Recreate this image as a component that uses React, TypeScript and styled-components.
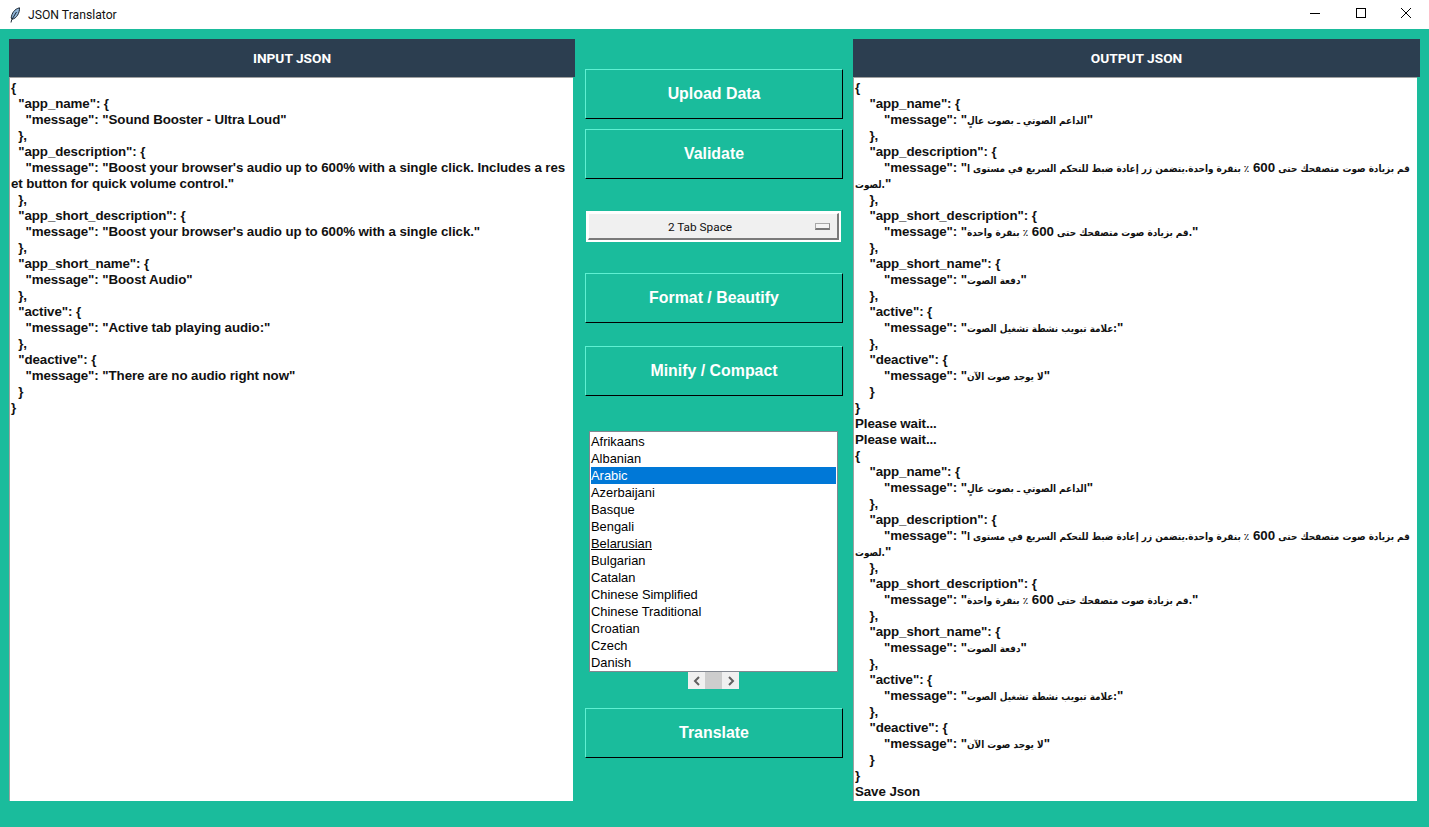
import React from 'react'
import styled, { createGlobalStyle } from 'styled-components'

const TEAL = '#1abc9c'
const NAVY = '#2c3e50'

const GlobalStyle = createGlobalStyle`
  html, body {
    margin: 0;
    padding: 0;
    overflow: hidden;
    background: ${TEAL};
  }
`

const Window = styled.div`
  display: flex;
  flex-direction: column;
  width: 1429px;
  height: 827px;
  background: ${TEAL};
`

const TitleBar = styled.div`
  display: flex;
  align-items: center;
  flex: 0 0 29px;
  padding-left: 9px;
  background: #fff;
`

const AppTitle = styled.span`
  margin-left: 7px;
  font: 12.2px 'Roboto', 'Open Sans', sans-serif;
  color: #111;
`

const Controls = styled.div`
  display: flex;
  align-self: flex-start;
  margin-left: auto;
`

const ControlButton = styled.div`
  display: flex;
  align-items: center;
  justify-content: center;
  width: 45.5px;
  height: 26px;
`

const Main = styled.div`
  display: grid;
  grid-template-columns: 566px 278px 567px;
  flex: 1;
  margin: 0 0 0 9px;
  padding-top: 10px;
`

const Column = styled.section`
  display: flex;
  flex-direction: column;
  height: 762px;
`

const PanelHeading = styled.h2`
  flex: 0 0 38px;
  margin: 0;
  background: ${NAVY};
  color: #fff;
  font: bold 13.7px/38px 'Roboto', 'Liberation Sans', sans-serif;
  text-align: center;
`

const CodePanel = styled.div<{ $gap: number }>`
  flex: 1;
  margin-right: ${(p) => p.$gap}px;
  padding: 2px 0 0 1px;
  overflow: hidden;
  background: #fff;
  border-top: 1px solid #a0a0a0;
  border-left: 1px solid #a0a0a0;
`

const CodeLine = styled.div`
  height: 16px;
  font: bold 13.33px/16px 'Liberation Sans', Arial, sans-serif;
  letter-spacing: -0.09px;
  color: #111;
  white-space: pre;
`

const ArabicRun = styled.span`
  font-family: 'DejaVu Sans', sans-serif;
  font-size: 9.9px;
  font-weight: bold;
  font-stretch: condensed;
  line-height: 16px;
  letter-spacing: 0;
`

const Actions = styled.div`
  display: flex;
  flex-direction: column;
  padding: 30px 10px 0;
`

const ActionButton = styled.button<{ $top?: number }>`
  flex: 0 0 50px;
  margin-top: ${(p) => p.$top ?? 0}px;
  padding: 0;
  background: ${TEAL};
  color: #fff;
  font: bold 15.9px 'Liberation Sans', Arial, sans-serif;
  border-style: solid;
  border-width: 1px;
  border-color: #5ff0d2 #000 #000 #5ff0d2;
`

const Dropdown = styled.div`
  display: flex;
  align-items: center;
  height: 31px;
  width: 255px;
  margin: 32px 0 0 1px;
  padding: 2px;
  box-sizing: border-box;
  background: #fff;
`

const DropdownFace = styled.div`
  position: relative;
  flex: 1;
  height: 27px;
  box-sizing: border-box;
  padding-right: 26px;
  background: #f0f0f0;
  border-style: solid;
  border-width: 1px 2px 2px 1px;
  border-color: #fff #7a7a7a #7a7a7a #fff;
  font: 11.8px/27px 'Roboto', 'Open Sans', sans-serif;
  color: #111;
  text-align: center;
`

const DropdownMark = styled.span`
  position: absolute;
  right: 7px;
  top: 9px;
  width: 15px;
  height: 7px;
  box-sizing: border-box;
  background: #f4f4f4;
  border-style: solid;
  border-width: 1px 1px 2px 1px;
  border-color: #a8a8a8 #8a8a8a #777 #a8a8a8;
`

const LanguageList = styled.ul`
  flex: 0 0 241px;
  width: 249px;
  margin: 35px 0 0 4px;
  padding: 1px 1px 1px 1px;
  box-sizing: border-box;
  list-style: none;
  overflow: hidden;
  background: #fff;
  border: 1px solid #828790;
`

const LanguageRow = styled.li<{ $selected?: boolean; $active?: boolean }>`
  height: 17px;
  background: ${(p) => (p.$selected ? '#0078d7' : 'transparent')};
  color: ${(p) => (p.$selected ? '#fff' : '#000')};
  font: 12.9px/17px 'Liberation Sans', Arial, sans-serif;
  text-decoration: ${(p) => (p.$active ? 'underline' : 'none')};
`

const ScrollStrip = styled.div`
  display: flex;
  align-self: flex-start;
  align-items: center;
  flex: 0 0 17px;
  width: 51px;
  margin-left: 103px;
  background: #f0f0f0;
`

const ScrollArrow = styled.div`
  display: flex;
  align-items: center;
  justify-content: center;
  width: 17px;
  height: 17px;
`

const ScrollThumb = styled.div`
  width: 17px;
  height: 17px;
  background: #cdcdcd;
`

const languages = [
  'Afrikaans',
  'Albanian',
  'Arabic',
  'Azerbaijani',
  'Basque',
  'Bengali',
  'Belarusian',
  'Bulgarian',
  'Catalan',
  'Chinese Simplified',
  'Chinese Traditional',
  'Croatian',
  'Czech',
  'Danish',
]

const inputLines = [
  '{',
  '  "app_name": {',
  '    "message": "Sound Booster - Ultra Loud"',
  '  },',
  '  "app_description": {',
  '    "message": "Boost your browser\'s audio up to 600% with a single click. Includes a res',
  'et button for quick volume control."',
  '  },',
  '  "app_short_description": {',
  '    "message": "Boost your browser\'s audio up to 600% with a single click."',
  '  },',
  '  "app_short_name": {',
  '    "message": "Boost Audio"',
  '  },',
  '  "active": {',
  '    "message": "Active tab playing audio:"',
  '  },',
  '  "deactive": {',
  '    "message": "There are no audio right now"',
  '  }',
  '}',
]

const translated = [
  '{',
  '    "app_name": {',
  '        "message": "الداعم الصوتي ـ بصوت عالٍ"',
  '    },',
  '    "app_description": {',
  '        "message": "قم بزيادة صوت متصفحك حتى 600 ٪ بنقرة واحدة.يتضمن زر إعادة ضبط للتحكم السريع في مستوى ا',
  'لصوت."',
  '    },',
  '    "app_short_description": {',
  '        "message": "قم بزيادة صوت متصفحك حتى 600 ٪ بنقرة واحدة."',
  '    },',
  '    "app_short_name": {',
  '        "message": "دفعة الصوت"',
  '    },',
  '    "active": {',
  '        "message": "علامة تبويب نشطة تشغيل الصوت:"',
  '    },',
  '    "deactive": {',
  '        "message": "لا يوجد صوت الآن"',
  '    }',
  '}',
]

const outputLines = [...translated, 'Please wait...', 'Please wait...', ...translated, 'Save Json']

// arabic comes out much smaller than the latin text, the digits stay full size
function renderLine(line: string) {
  return line.split(/([\u0600-\u06ff][^"0-9]*)/).map((part, i) =>
    /[\u0600-\u06ff]/.test(part) ? <ArabicRun key={i}>{part}</ArabicRun> : part
  )
}

function FeatherIcon() {
  return (
    <svg width="12" height="16" viewBox="0 0 12 16">
      <path d="M10.5 0.8C5.5 2 2.8 6 2.2 11l1 1.2C7.5 11.5 10.8 6 10.5 0.8Z" fill="#8fb4d6" stroke="#1c2733" strokeWidth="1" />
      <path d="M7.5 5 2.6 13 2 15.5" fill="none" stroke="#1c2733" strokeWidth="1" />
    </svg>
  )
}

function Chevron({ flip }: { flip?: boolean }) {
  return (
    <svg width="8" height="10" viewBox="0 0 8 10">
      <path d={flip ? 'M2 1l4 4-4 4' : 'M6 1 2 5l4 4'} fill="none" stroke="#606060" strokeWidth="2" />
    </svg>
  )
}

export default function App() {
  return (
    <Window>
      <GlobalStyle />
      <TitleBar>
        <FeatherIcon />
        <AppTitle>JSON Translator</AppTitle>
        <Controls>
          <ControlButton>
            <svg width="10" height="10" viewBox="0 0 10 10">
              <path d="M0 5.5h10" stroke="#000" strokeWidth="1" />
            </svg>
          </ControlButton>
          <ControlButton>
            <svg width="10" height="10" viewBox="0 0 10 10">
              <rect x="0.5" y="0.5" width="9" height="9" fill="none" stroke="#000" strokeWidth="1" />
            </svg>
          </ControlButton>
          <ControlButton>
            <svg width="10" height="10" viewBox="0 0 10 10">
              <path d="M0 0l10 10M10 0 0 10" stroke="#000" strokeWidth="1" />
            </svg>
          </ControlButton>
        </Controls>
      </TitleBar>
      <Main>
        <Column>
          <PanelHeading>INPUT JSON</PanelHeading>
          <CodePanel $gap={2}>
            {inputLines.map((line, i) => (
              <CodeLine key={i}>{line}</CodeLine>
            ))}
          </CodePanel>
        </Column>
        <Actions>
          <ActionButton>Upload Data</ActionButton>
          <ActionButton $top={10}>Validate</ActionButton>
          <Dropdown>
            <DropdownFace>
              2 Tab Space
              <DropdownMark />
            </DropdownFace>
          </Dropdown>
          <ActionButton $top={31}>Format / Beautify</ActionButton>
          <ActionButton $top={23}>Minify / Compact</ActionButton>
          <LanguageList>
            {languages.map((name) => (
              <LanguageRow key={name} $selected={name === 'Arabic'} $active={name === 'Belarusian'}>
                {name}
              </LanguageRow>
            ))}
          </LanguageList>
          <ScrollStrip>
            <ScrollArrow>
              <Chevron />
            </ScrollArrow>
            <ScrollThumb />
            <ScrollArrow>
              <Chevron flip />
            </ScrollArrow>
          </ScrollStrip>
          <ActionButton $top={19}>Translate</ActionButton>
        </Actions>
        <Column>
          <PanelHeading>OUTPUT JSON</PanelHeading>
          <CodePanel $gap={3}>
            {outputLines.map((line, i) => (
              <CodeLine key={i}>{renderLine(line)}</CodeLine>
            ))}
          </CodePanel>
        </Column>
      </Main>
    </Window>
  )
}
